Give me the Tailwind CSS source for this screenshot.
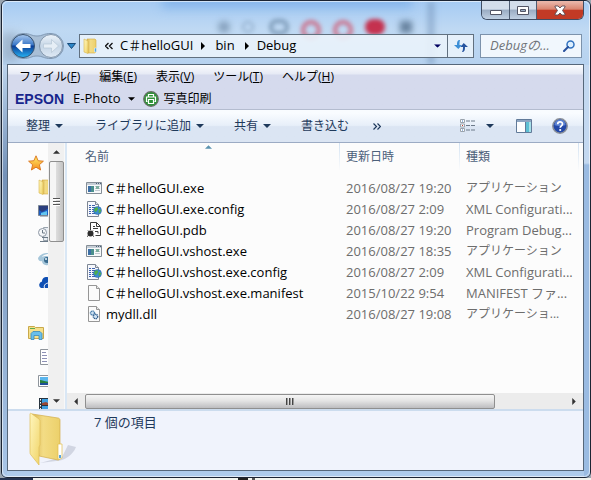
<!DOCTYPE html>
<html lang="ja">
<head>
  <meta charset="UTF-8" />
  <meta name="viewport" content="width=device-width, initial-scale=1" />
  <title>Debug</title>
  <script src="https://cdn.jsdelivr.net/npm/@tailwindcss/browser@4"></script>
  <style>
    body {
      font-family: 'Open Sans', 'Noto Sans CJK JP', sans-serif;
    }
  </style>
</head>
<body class="h-screen overflow-hidden bg-[#9aa5b0] flex flex-col text-xs text-black">

  <!-- Shared icons -->
  <svg class="absolute w-0 h-0">
    <defs>
      <linearGradient id="g-folder" x1="0" x2="1"><stop offset="0" stop-color="#d9b552" /><stop offset=".4" stop-color="#f3dc85" /><stop offset="1" stop-color="#ecd06a" /></linearGradient>
      <linearGradient id="g-front" x1="0" x2="1" y2="1"><stop offset="0" stop-color="#fff6bd" /><stop offset="1" stop-color="#f0d468" /></linearGradient>
      <linearGradient id="g-blue" x2="0" y2="1"><stop offset="0" stop-color="#a9c8ee" /><stop offset=".45" stop-color="#3b78c8" /><stop offset=".5" stop-color="#0b3c96" /><stop offset="1" stop-color="#27b4f4" /></linearGradient>
      <linearGradient id="g-pale" x2="0" y2="1"><stop offset="0" stop-color="#eef4fa" /><stop offset=".5" stop-color="#c5d5e6" /><stop offset="1" stop-color="#dfeaf5" /></linearGradient>
      <linearGradient id="g-star" x2="0" y2="1"><stop offset="0" stop-color="#fff06a" /><stop offset="1" stop-color="#f58a1c" /></linearGradient>
    </defs>
    <symbol id="i-down" viewBox="0 0 8 4"><path d="M0 0h8L4 4z" fill="currentColor" /></symbol>
    <symbol id="i-right" viewBox="0 0 4 8"><path d="M0 0l4 4-4 4z" fill="currentColor" /></symbol>
    <symbol id="i-folder" viewBox="0 0 16 16">
      <path d="M4 1h8l1 1v12l-1 1H5z" fill="url(#g-folder)" stroke="#d3ab45" stroke-width=".6" />
      <path d="M1 1l4 2v12.500L1 14z" fill="url(#g-front)" stroke="#d9b64c" stroke-width=".6" />
      <path d="M11.500 10h2v4h-2z" fill="#4fa6e6" stroke="#fff" stroke-width=".5" />
    </symbol>
    <symbol id="i-exe" viewBox="0 0 16 16">
      <path d="M.5 2.500h15v11H.5z" fill="#f7f9fa" stroke="#858e97" />
      <path d="M1 3h14v2H1z" fill="#c6ced6" />
      <path d="M10 3.500h1M12 3.500h1M14 3.500h1" stroke="#4b6178" />
      <path d="M2 6h6v6H2z" fill="#4a8f8c" /><path d="M2 6h3v6H2z" fill="#3d6fa5" />
      <path d="M9 6.500h5M9 8.500h5M9 10.500h5" stroke="#c2cad2" /><path d="M10 6h3v3h-3z" fill="#7fae9f" />
    </symbol>
    <symbol id="i-config" viewBox="0 0 16 16">
      <path d="M1.500 .5h8l3 3v12h-11z" fill="#f6f8fd" stroke="#7d8694" />
      <path d="M9.500 .5v3h3" fill="#dfe4ee" stroke="#7d8694" />
      <path d="M3 4.500h2M6 4.500h3M3 6.500h2M6 6.500h5M3 8.500h2M6 8.500h3M3 10.500h2M6 10.500h2M3 12.500h2M6 12.500h4" stroke="#3f62ad" />
      <circle cx="11.500" cy="9.500" r="4" fill="#3b8bd0" stroke="#2a62a0" stroke-width=".5" />
      <path d="M9 7c2-1 3-1 3 1s-2 1-1.500 3c-2 0-3-2-1.500-4zM13 8l2 1c0 2-1 3-2.500 3z" fill="#4fb04a" />
    </symbol>
    <symbol id="i-pdb" viewBox="0 0 16 16">
      <path d="M4.500 8V.5h6l4 4v9h-5" fill="#fff" stroke="#3c3c3c" />
      <path d="M10.500 .5v4h4M7 4.500h2M7 6.500h5" fill="none" stroke="#3c3c3c" />
      <circle cx="4.500" cy="11.500" r="3" fill="#2d2d2d" />
      <path d="M2 8.500l1 1M7 8.500l-1 1M1 14.500l1.500-1M8 14.500l-1.500-1" stroke="#2d2d2d" />
      <path d="M9 9.500h3v2" fill="none" stroke="#3c3c3c" />
    </symbol>
    <symbol id="i-blank" viewBox="0 0 16 16">
      <path d="M2.500 .5h8l3 3v12h-11z" fill="#fbfbfb" stroke="#969696" />
      <path d="M10.500 .5v3h3" fill="#e8e8e8" stroke="#969696" />
    </symbol>
    <symbol id="i-dll" viewBox="0 0 16 16">
      <path d="M2.500 .5h8l3 3v12h-11z" fill="#fbfbfb" stroke="#969696" />
      <path d="M10.500 .5v3h3" fill="#e8e8e8" stroke="#969696" />
      <circle cx="6.500" cy="7" r="2" fill="#cfe2f2" stroke="#4b7fac" stroke-width="1.400" stroke-dasharray="1.200 .5" />
      <circle cx="9.500" cy="10.500" r="2.200" fill="#cfe2f2" stroke="#33608f" stroke-width="1.400" stroke-dasharray="1.200 .5" />
    </symbol>
  </svg>

  <!-- Explorer window -->
  <div class="relative flex-1 min-h-0 ml-px flex flex-col overflow-hidden rounded-md border border-[#1b2433] pl-[5px] pr-[6px] pb-[6px] bg-[#b1cdec]">

    <!-- Glass frame: what shows through from behind -->
    <div class="absolute inset-0 bg-linear-to-b from-[#a5cbf3] via-[#bfd9f3] via-[28px] to-[#aecbeb] to-[100px]"></div>
    <div class="absolute inset-x-0 top-0 h-16 overflow-hidden">
      <div class="absolute left-0 top-8 w-4 h-7 bg-[#8396aa]/50 blur-[5px]"></div>
      <div class="absolute left-[160px] -top-2 w-[250px] h-4 bg-[#6ea6e6]/50 blur-[5px]"></div>
      <div class="absolute left-[216px] top-5 w-3 h-3 rounded-full bg-[#6f8aa6]/70 blur-[3px]"></div>
      <div class="absolute left-[240px] top-5 w-3 h-3 rounded-full border-2 border-[#8fabc8] blur-[2px]"></div>
      <div class="absolute left-[267px] top-[18px] w-5 h-4 rounded-full border-4 border-[#7290ad]/80 blur-[2px]"></div>
      <div class="absolute left-[299px] top-[19px] w-5 h-5 rounded-full border-4 border-[#d0566f]/80 blur-[2px]"></div>
      <div class="absolute left-[331px] top-[19px] w-5 h-5 rounded-full border-4 border-[#d0566f]/80 blur-[2px]"></div>
      <div class="absolute left-[363px] top-[18px] w-5 h-4 rounded-full bg-[#c51f3d]/90 blur-[2px]"></div>
      <div class="absolute left-[398px] top-5 w-3 h-3 bg-[#506c88]/80 blur-[3px]"></div>
      <div class="absolute left-[426px] top-0 w-[6px] h-16 bg-[#6f90b5]/60 blur-[3px]"></div>
    </div>
    <div class="absolute left-0 top-16 bottom-0 w-[5px] bg-linear-to-b from-[#bcd3ec] via-[#7492b8] via-[110px] to-[#a9c6e8]"></div>
    <div class="absolute right-0 top-16 bottom-0 w-[6px] bg-linear-to-b from-[#c3d8f0] from-[98px] to-[#9abbe2] to-[100px]"></div>
    <div class="absolute inset-0 rounded-md border border-white/60"></div>

    <!-- Caption buttons -->
    <div class="relative flex justify-end">
      <div class="flex h-[19px] rounded-b-md border border-t-0 border-[#3f4d63] overflow-hidden">
        <button aria-label="最小化" class="w-7 flex items-center justify-center border-r border-[#4d5c72] bg-linear-to-b from-[#d3deeb] from-45% via-[#9aacc3] via-50% to-[#c0d0e2]">
          <svg class="w-3 h-4" viewBox="0 0 12 16"><path d="M.5 8.500h11v4H.5z" fill="#fff" stroke="#535666" /></svg>
        </button>
        <button aria-label="最大化" class="w-[27px] flex items-center justify-center border-r border-[#4d5c72] bg-linear-to-b from-[#d3deeb] from-45% via-[#9aacc3] via-50% to-[#c0d0e2]">
          <svg class="w-3 h-4" viewBox="0 0 12 16"><path d="M.5 4.500h11v8H.5z" fill="#fff" stroke="#535666" /><path d="M3.500 7.500h5v2h-5z" fill="#9aacc3" stroke="#535666" /></svg>
        </button>
        <button aria-label="閉じる" class="w-[46px] flex items-center justify-center bg-linear-to-b from-[#e9b5a8] from-5% via-[#d98571] via-45% to-[#c23a25] to-52%">
          <svg class="w-3 h-4" viewBox="0 0 12 16"><path d="M1 4h3l2 2 2-2h3v1L8.500 8.500 11 12v1H8l-2-2-2 2H1v-1l2.500-3.500L1 5z" fill="#fff" stroke="#5a4a52" stroke-width=".9" /></svg>
        </button>
      </div>
    </div>

    <!-- Navigation bar -->
    <div class="relative flex items-center h-11 pt-[7px] pr-[2px]">
      <div class="flex items-center ml-[2px]">
        <svg class="w-[56px] h-[30px]" viewBox="0 0 56 30">
          <path d="M14 2.500C22 2.500 22 5 28 5s6-2.500 14-2.500a12.500 12.500 0 010 25c-8 0-8-2.500-14-2.500s-6 2.500-14 2.500a12.500 12.500 0 010-25z" fill="#a9bfd6" stroke="#8199b4" />
          <circle cx="14" cy="15" r="11.500" fill="url(#g-blue)" stroke="#3a536f" />
          <path d="M6.500 15l7-6.500v4.500h8v4h-8v4.500z" fill="#fff" />
          <circle cx="42" cy="15" r="11.500" fill="url(#g-pale)" stroke="#8296ac" />
          <path d="M49.500 15l-7-6.500v4.500h-8v4h8v4.500z" fill="#e6eef6" stroke="#b5c5d6" stroke-width=".7" />
        </svg>
        <svg class="ml-[2px] w-[9px] h-[6px]" viewBox="0 0 9 6"><path d="M.5 .5h8l-4 5z" fill="#2b86c8" stroke="#174a78" /></svg>
      </div>
      <nav class="ml-[3px] flex-1 h-6 flex border border-[#61707f] bg-[#eaf3fb]/90 text-[13px]">
        <div class="flex-1 flex items-center pl-[3px] pr-[6px]">
          <svg class="w-4 h-4"><use href="#i-folder" /></svg>
          <svg class="ml-[6px] w-2 h-2" viewBox="0 0 8 8"><path d="M3.500 1l-3 3 3 3M7.500 1l-3 3 3 3" fill="none" stroke="#111" stroke-width="1.300" /></svg>
          <a href="#" class="ml-[7px]">C＃helloGUI</a>
          <svg class="ml-2 w-1 h-2"><use href="#i-right" /></svg>
          <a href="#" class="ml-[10px]">bin</a>
          <svg class="ml-[10px] w-1 h-2"><use href="#i-right" /></svg>
          <a href="#" class="ml-2">Debug</a>
          <button aria-label="以前の場所" class="ml-auto text-[#000060]"><svg class="w-[7px] h-1" viewBox="0 0 8 4"><use href="#i-down" /></svg></button>
        </div>
        <button aria-label="更新" class="w-[26px] flex items-center justify-center border-l border-[#61707f]">
          <svg class="w-[14px] h-[14px]" viewBox="0 0 14 14">
            <path d="M6 1C3.500 1 3 2.500 3 6H0l4.300 4L8 6H5.500C5.500 4 5.500 3 6 1z" fill="#3d8fd6" />
            <path d="M8 13c2.500 0 3-1.500 3-5h3L9.700 4 6.500 8h2.500C9 10 9 11 8 13z" fill="#27549f" />
          </svg>
        </button>
      </nav>
      <label class="ml-[6px] w-[102px] h-6 flex items-center border border-[#7c92ab] bg-[#f1f7fd] pl-[9px] pr-[6px]">
        <input type="text" aria-label="検索" placeholder="Debugの..." class="min-w-0 flex-1 outline-none text-[13px] italic placeholder:text-[#707479]" />
        <svg class="w-3 h-3" viewBox="0 0 12 12"><circle cx="7.500" cy="4.500" r="3.500" fill="#dcefff" stroke="#3272bf" stroke-width="1.500" /><path d="M5 7L1 11" stroke="#27509c" stroke-width="2" stroke-linecap="round" /></svg>
      </label>
    </div>

    <!-- Client area -->
    <div class="relative flex-1 min-h-0 flex flex-col border border-[#56677a] bg-[#fcfcfc]">

      <!-- Menu bar and EPSON bar -->
      <div class="shrink-0 border-b border-[#b4bccf] bg-linear-to-b from-[#fbfcfe] via-[#e6eaf5] via-[9px] to-[#d5daed] to-[10px]">
        <div class="flex items-center gap-[19px] h-6 pl-[11px]">
          <button>ファイル(<u>F</u>)</button>
          <button>編集(<u>E</u>)</button>
          <button>表示(<u>V</u>)</button>
          <button>ツール(<u>T</u>)</button>
          <button>ヘルプ(<u>H</u>)</button>
        </div>
        <div class="flex items-center h-5 pl-[7px]">
          <span class="w-[58px] font-['Liberation_Sans'] font-bold text-[14px] text-[#17258c]">EPSON</span>
          <button class="flex items-center text-[13px]">E-Photo<svg class="ml-2 w-[7px] h-1"><use href="#i-down" /></svg></button>
          <button class="ml-2 flex items-center gap-1">
            <svg class="w-4 h-4" viewBox="0 0 16 16">
              <circle cx="8" cy="8" r="7.300" fill="#2d9237" stroke="#667066" stroke-width="1.200" />
              <path d="M5.500 6V3.500h5V6M4.500 10.500h-1v-4.500h9v4.500h-1M5.500 8.500h5v4h-5z" fill="none" stroke="#fff" stroke-width="1.200" />
            </svg>写真印刷
          </button>
        </div>
      </div>

      <!-- Command bar -->
      <div class="shrink-0 flex items-center h-[33px] pl-[18px] pr-[15px] border-b border-[#9cabc4] bg-linear-to-b from-[#f9fcff] from-10% via-[#e7eff9] via-48% to-[#dbe5f3] to-52% text-[#1e395b]">
        <button class="flex items-center gap-[5px]">整理<svg class="w-2 h-1"><use href="#i-down" /></svg></button>
        <button class="ml-8 flex items-center gap-[5px]">ライブラリに追加<svg class="w-2 h-1"><use href="#i-down" /></svg></button>
        <button class="ml-[30px] flex items-center gap-[5px]">共有<svg class="w-2 h-1"><use href="#i-down" /></svg></button>
        <button class="ml-[30px]">書き込む</button>
        <button aria-label="その他" class="ml-6"><svg class="w-2 h-[7px]" viewBox="0 0 8 7"><path d="M.5 .5l3 3-3 3M4.500 .5l3 3-3 3" fill="none" stroke="#1e395b" stroke-width="1.200" /></svg></button>
        <button aria-label="表示方法" class="ml-auto flex items-center gap-[10px]">
          <svg class="w-4 h-[14px]" viewBox="0 0 16 14">
            <path d="M.5 .5h4v3h-4zM.5 5h4v3h-4zM.5 9.500h4v3h-4z" fill="#fff" stroke="#9aa3ad" />
            <path d="M2 2h1" stroke="#3670b8" /><path d="M2 6.500h1" stroke="#c43a2c" /><path d="M2 11h1" stroke="#3670b8" />
            <path d="M6 2h4M11 2h4M6 6.500h4M11 6.500h4M6 11h4M11 11h4" stroke="#6c7a8a" />
          </svg>
          <svg class="w-2 h-1"><use href="#i-down" /></svg>
        </button>
        <button aria-label="プレビュー" class="ml-[22px]">
          <svg class="w-4 h-[14px]" viewBox="0 0 16 14">
            <path d="M.5 .5h15v13H.5z" fill="#fcfdfe" stroke="#617a99" /><path d="M1 1h14v2H1z" fill="#8da5c2" />
            <path d="M10 3h5v10h-5z" fill="#5cbfd3" /><path d="M13 3h2v10h-2z" fill="#a6e0e8" /><path d="M9.500 3v10" stroke="#617a99" />
          </svg>
        </button>
        <button aria-label="ヘルプ" class="ml-5">
          <svg class="w-4 h-4" viewBox="0 0 16 16">
            <circle cx="8" cy="8" r="7.200" fill="#2348a8" stroke="#8a8f98" stroke-width="1.500" />
            <path d="M2.500 7a5.500 5.500 0 0111 0c-3 1.500-8 1.500-11 0z" fill="#5c82d2" />
            <path d="M5.700 6.200C5.700 3.200 10.500 3.200 10.500 6c0 1.800-2.300 1.800-2.300 3.700" fill="none" stroke="#fff" stroke-width="1.700" /><circle cx="8.200" cy="12" r="1.100" fill="#fff" />
          </svg>
        </button>
      </div>

      <div class="flex-1 min-h-0 flex">
        <!-- Navigation pane -->
        <aside class="w-10 shrink-0 overflow-hidden pt-2">
          <div class="h-6 pl-5 flex items-center">
            <svg class="w-4 h-4 shrink-0" viewBox="0 0 16 16"><path d="M8 .8l2.100 4.900 5.300.5-4 3.500 1.200 5.300L8 12.200 3.400 15l1.200-5.300-4-3.500 5.300-.5z" fill="url(#g-star)" stroke="#d9731c" stroke-width=".9" /></svg>
          </div>
          <div class="h-6 pl-[30px] flex items-center"><svg class="w-4 h-4 shrink-0"><use href="#i-folder" /></svg></div>
          <div class="h-6 pl-[30px] flex items-center">
            <svg class="w-4 h-4 shrink-0" viewBox="0 0 16 16"><path d="M.5 2.500h15v10H.5z" fill="#1d5fc4" stroke="#7b8694" /><path d="M1 3h14L4 9l-3-2z" fill="#2a3e7d" /><path d="M3 10l6-2v4H3z" fill="#62c5ef" /><path d="M2 13.500h12" stroke="#b3bcc6" /></svg>
          </div>
          <div class="h-6 pl-[30px] flex items-center">
            <svg class="w-4 h-4 shrink-0" viewBox="0 0 16 16"><path d="M5.500 .5h9v13h-9z" fill="#e8edf2" stroke="#9aa4ae" /><circle cx="4.500" cy="5.500" r="4" fill="#f5f7f9" stroke="#8c97a2" /><path d="M4.500 3v3H7M4 10.500h6v4H2" fill="none" stroke="#6c7a87" /></svg>
          </div>
          <div class="h-6 pl-[30px] flex items-center">
            <svg class="w-4 h-4 shrink-0" viewBox="0 0 16 16"><path d="M0 7c3-5 9-6 12-4-4 0-7 1-8 3 3-2 7-1 9 1v5c-4 4-9 2-9-2-2 1-4-1-4-3z" fill="#a5c6da" /><circle cx="9" cy="9" r="3" fill="#3b6c90" /><circle cx="8" cy="8" r="1" fill="#e9f4fa" /></svg>
          </div>
          <div class="h-6 pl-[31px] flex items-center">
            <svg class="w-4 h-4 shrink-0" viewBox="0 0 16 16"><path d="M2 13a3.500 3.500 0 011-6.500C3 2 8 1 11 3l5 10z" fill="#0f4fb3" /><path d="M6 14c-2-3 0-6 4-6" fill="none" stroke="#fff" /></svg>
          </div>
          <div class="mt-[26px] h-6 pl-5 flex items-center">
            <svg class="w-4 h-4 shrink-0" viewBox="0 0 16 16"><path d="M.5 1.500h6l1 1h8v11H.5z" fill="#f6e08c" stroke="#c9a94b" /><path d="M2 3.500h5" stroke="#5dac4b" /><path d="M3 14.500v-6l2-2h7l2 2v6h-3v-4H6v4z" fill="#68bfec" stroke="#3a89b8" stroke-width=".8" /></svg>
          </div>
          <div class="h-6 pl-[30px] flex items-center">
            <svg class="w-4 h-4 shrink-0" viewBox="0 0 16 16"><path d="M2.500 .5h12v15h-12z" fill="#fff" stroke="#8f959c" /><path d="M4 3.500h4M4 6.500h5M4 9.500h5M4 12.500h5" stroke="#8d90b5" /></svg>
          </div>
          <div class="h-6 pl-[30px] flex items-center">
            <svg class="w-4 h-4 shrink-0" viewBox="0 0 16 16"><path d="M.5 2.500h15v11H.5z" fill="#fff" stroke="#8f959c" /><path d="M2 4h12v8H2z" fill="#5ab6ee" /><path d="M2 7c3 0 5 2 12 2v1H2z" fill="#27803c" /><path d="M2 10h12v2H2z" fill="#1f4f9a" /></svg>
          </div>
          <div class="h-6 pl-[30px] flex items-center">
            <svg class="w-4 h-4 shrink-0" viewBox="0 0 16 16"><path d="M1 1h14v15H1z" fill="#28343f" /><path d="M2.500 2v14" stroke="#fff" stroke-dasharray="1.500 1.500" /><path d="M4 2h10v6H4z" fill="#3c9fe2" /><path d="M4 9h10v7H4z" fill="#3c9fe2" /><path d="M4 6l4-1 4 2v1H4zM4 14l5-2v3H4z" fill="#9a4834" /></svg>
          </div>
        </aside>

        <!-- Vertical scroll bar -->
        <div class="w-[17px] shrink-0 flex flex-col items-center bg-[#f0f0f0] border-r border-[#f8f8f8]">
          <button aria-label="上へ" class="h-[18px] flex items-center text-[#333]"><svg class="w-[7px] h-1 rotate-180"><use href="#i-down" /></svg></button>
          <div class="w-[15px] h-[81px] rounded-xs border border-[#8f8f8f] bg-linear-to-r from-[#f5f5f5] from-45% via-[#dcdcdc] via-50% to-[#c3c3c3] flex flex-col items-center justify-center gap-px">
            <span class="w-[7px] h-[2px] border-t border-[#555] bg-white"></span>
            <span class="w-[7px] h-[2px] border-t border-[#555] bg-white"></span>
            <span class="w-[7px] h-[2px] border-t border-[#555] bg-white"></span>
          </div>
          <button aria-label="下へ" class="mt-auto h-[17px] flex items-center text-[#333]"><svg class="w-[7px] h-1"><use href="#i-down" /></svg></button>
        </div>

        <!-- File list -->
        <div class="flex-1 min-w-0 flex flex-col border-l-2 border-[#d9e7f5]">
          <table class="table-fixed w-full text-[#6d6d6d]">
            <colgroup><col /><col class="w-[120px]" /><col class="w-[124px]" /></colgroup>
            <thead class="text-left text-[#4c607a]">
              <tr class="h-[34px] align-top">
                <th scope="col" class="font-normal">
                  <div class="relative h-7 flex items-center pl-[18px]">名前
                    <svg class="absolute top-[2px] left-[138px] w-[7px] h-1 rotate-180 text-[#5b93b0]"><use href="#i-down" /></svg>
                  </div>
                </th>
                <th scope="col" class="font-normal">
                  <div class="h-7 flex items-center">
                    <span class="w-px h-full bg-linear-to-b from-[#d3e2f2] to-[#fcfcfc]"></span><span class="pl-[6px]">更新日時</span>
                  </div>
                </th>
                <th scope="col" class="font-normal">
                  <div class="h-7 flex items-center pr-[4px]">
                    <span class="w-px h-full bg-linear-to-b from-[#d3e2f2] to-[#fcfcfc]"></span><span class="pl-[6px] flex-1">種類</span><span class="w-px h-full bg-linear-to-b from-[#d3e2f2] to-[#fcfcfc]"></span>
                  </div>
                </th>
              </tr>
            </thead>
            <tbody class="text-[13px] leading-5">
              <tr class="h-[21px]">
                <td class="pl-[19px]"><div class="flex items-center gap-1 text-black"><svg class="w-4 h-4"><use href="#i-exe" /></svg>C＃helloGUI.exe</div></td>
                <td class="pl-[7px]">2016/08/27 19:20</td><td class="pl-[7px] text-xs">アプリケーション</td>
              </tr>
              <tr class="h-[21px]">
                <td class="pl-[19px]"><div class="flex items-center gap-1 text-black"><svg class="w-4 h-4"><use href="#i-config" /></svg>C＃helloGUI.exe.config</div></td>
                <td class="pl-[7px]">2016/08/27 2:09</td><td class="pl-[7px]">XML Configurati...</td>
              </tr>
              <tr class="h-[21px]">
                <td class="pl-[19px]"><div class="flex items-center gap-1 text-black"><svg class="w-4 h-4"><use href="#i-pdb" /></svg>C＃helloGUI.pdb</div></td>
                <td class="pl-[7px]">2016/08/27 19:20</td><td class="pl-[7px]">Program Debug...</td>
              </tr>
              <tr class="h-[21px]">
                <td class="pl-[19px]"><div class="flex items-center gap-1 text-black"><svg class="w-4 h-4"><use href="#i-exe" /></svg>C＃helloGUI.vshost.exe</div></td>
                <td class="pl-[7px]">2016/08/27 18:35</td><td class="pl-[7px] text-xs">アプリケーション</td>
              </tr>
              <tr class="h-[21px]">
                <td class="pl-[19px]"><div class="flex items-center gap-1 text-black"><svg class="w-4 h-4"><use href="#i-config" /></svg>C＃helloGUI.vshost.exe.config</div></td>
                <td class="pl-[7px]">2016/08/27 2:09</td><td class="pl-[7px]">XML Configurati...</td>
              </tr>
              <tr class="h-[21px]">
                <td class="pl-[19px]"><div class="flex items-center gap-1 text-black"><svg class="w-4 h-4"><use href="#i-blank" /></svg>C＃helloGUI.vshost.exe.manifest</div></td>
                <td class="pl-[7px]">2015/10/22 9:54</td><td class="pl-[7px]">MANIFEST ファ...</td>
              </tr>
              <tr class="h-[21px]">
                <td class="pl-[19px]"><div class="flex items-center gap-1 text-black"><svg class="w-4 h-4"><use href="#i-dll" /></svg>mydll.dll</div></td>
                <td class="pl-[7px]">2016/08/27 19:08</td><td class="pl-[7px] text-xs">アプリケーショ...</td>
              </tr>
            </tbody>
          </table>

          <!-- Horizontal scroll bar -->
          <div class="mt-auto h-4 flex items-center bg-[#ececec] text-[#333]">
            <button aria-label="左へ" class="w-[18px] flex justify-center"><svg class="w-1 h-[7px] rotate-180"><use href="#i-right" /></svg></button>
            <div class="w-[410px] h-[15px] rounded-xs border border-[#8f8f8f] bg-linear-to-b from-[#f5f5f5] via-[#e4e4e4] via-45% to-[#bdbdc0] flex items-center justify-center gap-px">
              <span class="w-[2px] h-[7px] border-l border-[#444] bg-[#999]"></span>
              <span class="w-[2px] h-[7px] border-l border-[#444] bg-[#999]"></span>
              <span class="w-[2px] h-[7px] border-l border-[#444] bg-[#999]"></span>
            </div>
            <button aria-label="右へ" class="ml-auto w-[18px] flex justify-center"><svg class="w-1 h-[7px]"><use href="#i-right" /></svg></button>
          </div>
        </div>
      </div>

      <!-- Details pane -->
      <footer class="shrink-0 flex h-[61px] border-t-2 border-[#ccdcee] bg-[#f0f3fc] pl-5 text-[#1e395b]">
        <svg class="w-[54px] h-[58px]" viewBox="0 0 54 58">
          <path d="M12 52l22-6 6-12 8 2c-3 8-12 14-20 14z" fill="#8a93a6" opacity=".3" />
          <path d="M4 3l26 4c1 0 2 1 2 2v38c0 1-1 2-2 2L11 45z" fill="url(#g-folder)" stroke="#d3ae4a" stroke-width=".7" />
          <path d="M30 33h4v14l-2 1h-2z" fill="#fff" stroke="#e3bd4c" stroke-width=".7" /><path d="M31 44h2v3h-2z" fill="#57a4e0" />
          <path d="M2 3c0-1 1-1 2 0l7 5c1 1 1 2 1 3v23l-1 2v18L3 44c-1-1-1-2-1-3z" fill="url(#g-front)" stroke="#dfbd58" stroke-width=".7" />
        </svg>
        <p class="ml-3 text-[13px] leading-[22px]">7 個の項目</p>
      </footer>
    </div>
  </div>

  <!-- Edge of the window behind -->
  <div class="h-[2px] shrink-0 flex bg-[#f3f4ee]">
    <span class="w-[33px] bg-[#243350]"></span>
    <span class="ml-[205px] w-[10px] bg-[#222]"></span>
    <span class="ml-1 w-[3px] bg-[#555]"></span>
  </div>
</body>
</html>
